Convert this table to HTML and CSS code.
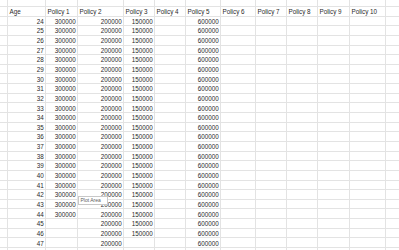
FILE: index.html
```html
<!DOCTYPE html>
<html>
<head>
<meta charset="utf-8">
<link rel="stylesheet" href="styles.css">
</head>
<body>
<div class="sheet">
<div class="c"></div><div class="c"></div><div class="c"></div><div class="c"></div><div class="c"></div><div class="c"></div><div class="c"></div><div class="c"></div><div class="c"></div><div class="c"></div><div class="c"></div><div class="c"></div><div class="c"></div>
<div class="c"></div><div class="c h">Age</div><div class="c h">Policy 1</div><div class="c h">Policy 2</div><div class="c h">Policy 3</div><div class="c h">Policy 4</div><div class="c h">Policy 5</div><div class="c h">Policy 6</div><div class="c h">Policy 7</div><div class="c h">Policy 8</div><div class="c h">Policy 9</div><div class="c h">Policy 10</div><div class="c"></div>
<div class="c"></div><div class="c n">24</div><div class="c n">300000</div><div class="c n">200000</div><div class="c n">150000</div><div class="c"></div><div class="c n">600000</div><div class="c"></div><div class="c"></div><div class="c"></div><div class="c"></div><div class="c"></div><div class="c"></div>
<div class="c"></div><div class="c n">25</div><div class="c n">300000</div><div class="c n">200000</div><div class="c n">150000</div><div class="c"></div><div class="c n">600000</div><div class="c"></div><div class="c"></div><div class="c"></div><div class="c"></div><div class="c"></div><div class="c"></div>
<div class="c"></div><div class="c n">26</div><div class="c n">300000</div><div class="c n">200000</div><div class="c n">150000</div><div class="c"></div><div class="c n">600000</div><div class="c"></div><div class="c"></div><div class="c"></div><div class="c"></div><div class="c"></div><div class="c"></div>
<div class="c"></div><div class="c n">27</div><div class="c n">300000</div><div class="c n">200000</div><div class="c n">150000</div><div class="c"></div><div class="c n">600000</div><div class="c"></div><div class="c"></div><div class="c"></div><div class="c"></div><div class="c"></div><div class="c"></div>
<div class="c"></div><div class="c n">28</div><div class="c n">300000</div><div class="c n">200000</div><div class="c n">150000</div><div class="c"></div><div class="c n">600000</div><div class="c"></div><div class="c"></div><div class="c"></div><div class="c"></div><div class="c"></div><div class="c"></div>
<div class="c"></div><div class="c n">29</div><div class="c n">300000</div><div class="c n">200000</div><div class="c n">150000</div><div class="c"></div><div class="c n">600000</div><div class="c"></div><div class="c"></div><div class="c"></div><div class="c"></div><div class="c"></div><div class="c"></div>
<div class="c"></div><div class="c n">30</div><div class="c n">300000</div><div class="c n">200000</div><div class="c n">150000</div><div class="c"></div><div class="c n">600000</div><div class="c"></div><div class="c"></div><div class="c"></div><div class="c"></div><div class="c"></div><div class="c"></div>
<div class="c"></div><div class="c n">31</div><div class="c n">300000</div><div class="c n">200000</div><div class="c n">150000</div><div class="c"></div><div class="c n">600000</div><div class="c"></div><div class="c"></div><div class="c"></div><div class="c"></div><div class="c"></div><div class="c"></div>
<div class="c"></div><div class="c n">32</div><div class="c n">300000</div><div class="c n">200000</div><div class="c n">150000</div><div class="c"></div><div class="c n">600000</div><div class="c"></div><div class="c"></div><div class="c"></div><div class="c"></div><div class="c"></div><div class="c"></div>
<div class="c"></div><div class="c n">33</div><div class="c n">300000</div><div class="c n">200000</div><div class="c n">150000</div><div class="c"></div><div class="c n">600000</div><div class="c"></div><div class="c"></div><div class="c"></div><div class="c"></div><div class="c"></div><div class="c"></div>
<div class="c"></div><div class="c n">34</div><div class="c n">300000</div><div class="c n">200000</div><div class="c n">150000</div><div class="c"></div><div class="c n">600000</div><div class="c"></div><div class="c"></div><div class="c"></div><div class="c"></div><div class="c"></div><div class="c"></div>
<div class="c"></div><div class="c n">35</div><div class="c n">300000</div><div class="c n">200000</div><div class="c n">150000</div><div class="c"></div><div class="c n">600000</div><div class="c"></div><div class="c"></div><div class="c"></div><div class="c"></div><div class="c"></div><div class="c"></div>
<div class="c"></div><div class="c n">36</div><div class="c n">300000</div><div class="c n">200000</div><div class="c n">150000</div><div class="c"></div><div class="c n">600000</div><div class="c"></div><div class="c"></div><div class="c"></div><div class="c"></div><div class="c"></div><div class="c"></div>
<div class="c"></div><div class="c n">37</div><div class="c n">300000</div><div class="c n">200000</div><div class="c n">150000</div><div class="c"></div><div class="c n">600000</div><div class="c"></div><div class="c"></div><div class="c"></div><div class="c"></div><div class="c"></div><div class="c"></div>
<div class="c"></div><div class="c n">38</div><div class="c n">300000</div><div class="c n">200000</div><div class="c n">150000</div><div class="c"></div><div class="c n">600000</div><div class="c"></div><div class="c"></div><div class="c"></div><div class="c"></div><div class="c"></div><div class="c"></div>
<div class="c"></div><div class="c n">39</div><div class="c n">300000</div><div class="c n">200000</div><div class="c n">150000</div><div class="c"></div><div class="c n">600000</div><div class="c"></div><div class="c"></div><div class="c"></div><div class="c"></div><div class="c"></div><div class="c"></div>
<div class="c"></div><div class="c n">40</div><div class="c n">300000</div><div class="c n">200000</div><div class="c n">150000</div><div class="c"></div><div class="c n">600000</div><div class="c"></div><div class="c"></div><div class="c"></div><div class="c"></div><div class="c"></div><div class="c"></div>
<div class="c"></div><div class="c n">41</div><div class="c n">300000</div><div class="c n">200000</div><div class="c n">150000</div><div class="c"></div><div class="c n">600000</div><div class="c"></div><div class="c"></div><div class="c"></div><div class="c"></div><div class="c"></div><div class="c"></div>
<div class="c"></div><div class="c n">42</div><div class="c n">300000</div><div class="c n">200000</div><div class="c n">150000</div><div class="c"></div><div class="c n">600000</div><div class="c"></div><div class="c"></div><div class="c"></div><div class="c"></div><div class="c"></div><div class="c"></div>
<div class="c"></div><div class="c n">43</div><div class="c n">300000</div><div class="c n">200000</div><div class="c n">150000</div><div class="c"></div><div class="c n">600000</div><div class="c"></div><div class="c"></div><div class="c"></div><div class="c"></div><div class="c"></div><div class="c"></div>
<div class="c"></div><div class="c n">44</div><div class="c n">300000</div><div class="c n">200000</div><div class="c n">150000</div><div class="c"></div><div class="c n">600000</div><div class="c"></div><div class="c"></div><div class="c"></div><div class="c"></div><div class="c"></div><div class="c"></div>
<div class="c"></div><div class="c n">45</div><div class="c"></div><div class="c n">200000</div><div class="c n">150000</div><div class="c"></div><div class="c n">600000</div><div class="c"></div><div class="c"></div><div class="c"></div><div class="c"></div><div class="c"></div><div class="c"></div>
<div class="c"></div><div class="c n">46</div><div class="c"></div><div class="c n">200000</div><div class="c n">150000</div><div class="c"></div><div class="c n">600000</div><div class="c"></div><div class="c"></div><div class="c"></div><div class="c"></div><div class="c"></div><div class="c"></div>
<div class="c"></div><div class="c n">47</div><div class="c"></div><div class="c n">200000</div><div class="c"></div><div class="c"></div><div class="c n">600000</div><div class="c"></div><div class="c"></div><div class="c"></div><div class="c"></div><div class="c"></div><div class="c"></div>
<div class="c"></div><div class="c n">48</div><div class="c"></div><div class="c n">200000</div><div class="c"></div><div class="c"></div><div class="c n">600000</div><div class="c"></div><div class="c"></div><div class="c"></div><div class="c"></div><div class="c"></div><div class="c"></div>
</div>
<div class="tip">Plot Area</div>
</body>
</html>
```

FILE: styles.css
```css
html, body {
  margin: 0;
  padding: 0;
  background: #ffffff;
  overflow: hidden;
}

body {
  width: 399px;
  height: 250px;
  position: relative;
  font-family: "Liberation Sans", Arial, sans-serif;
  font-size: 6.3px;
  color: #2a2a2a;
}

.sheet {
  display: grid;
  grid-template-columns: 7px 37px 31px 45px 30px 30px 34px 34px 30px 30px 31px 35px 1fr;
  grid-template-rows: 6px;
  grid-auto-rows: 8.65px;
  gap: 1px;
  background: #e3e3e3;
  height: 260px;
}

.c {
  background: #ffffff;
  display: flex;
  align-items: flex-end;
  line-height: 6.5px;
  white-space: nowrap;
  overflow: visible;
}

.h {
  justify-content: flex-start;
  padding-left: 1.5px;
}

.n {
  justify-content: flex-end;
  padding-right: 1.3px;
}

.tip {
  position: absolute;
  left: 78px;
  top: 196px;
  width: 26px;
  height: 7px;
  padding: 0 0 0 1.5px;
  border: 1px solid #c8c8c8;
  background: #ffffff;
  color: #5e5e5e;
  font-size: 5px;
  line-height: 7px;
  white-space: nowrap;
}
```
